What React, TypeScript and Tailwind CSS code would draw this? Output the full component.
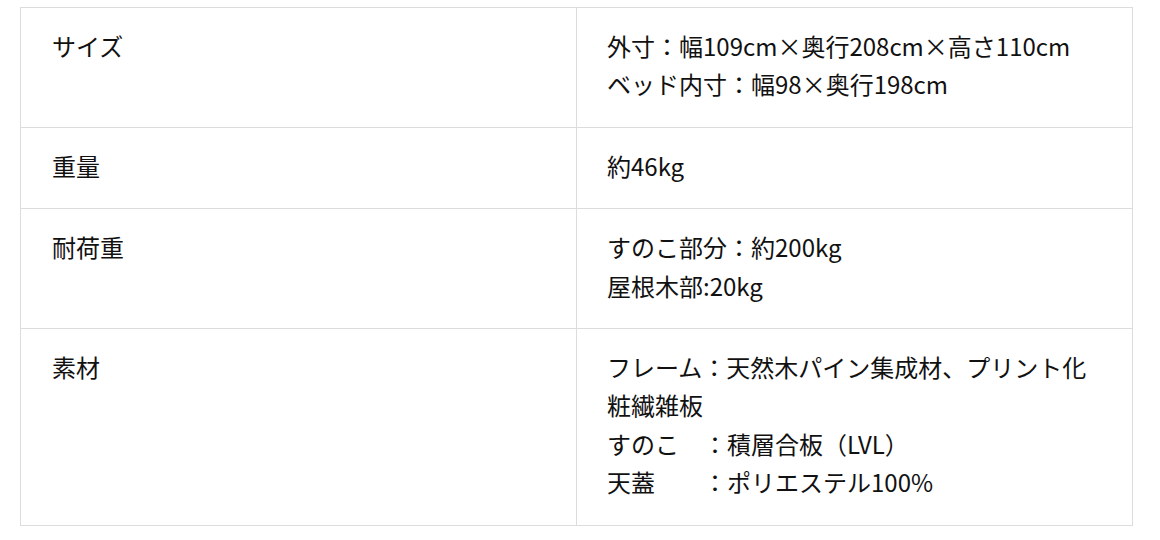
const rows: { label: string; lines: string[] }[] = [
  {
    label: "サイズ",
    lines: ["外寸：幅109cm×奥行208cm×高さ110cm", "ベッド内寸：幅98×奥行198cm"],
  },
  { label: "重量", lines: ["約46kg"] },
  { label: "耐荷重", lines: ["すのこ部分：約200kg", "屋根木部:20kg"] },
  {
    label: "素材",
    lines: [
      "フレーム：天然木パイン集成材、プリント化粧繊雑板",
      "すのこ　：積層合板（LVL）",
      "天蓋　　：ポリエステル100%",
    ],
  },
];

export default function App() {
  return (
    <div className="w-[1160px] h-[540px] bg-white pt-[7px] pl-[20px] font-['Noto_Sans_CJK_JP',sans-serif] text-[24px] leading-[1.6] text-[#111]">
      <table className="w-[1113px] border-collapse table-fixed">
        <tbody>
          {rows.map((r) => (
            <tr key={r.label}>
              <th className="w-1/2 border border-[#dcdcdc] px-[31px] pt-[19px] pb-[23px] text-left align-top font-normal">
                {r.label}
              </th>
              <td className="w-1/2 border border-[#dcdcdc] px-[30px] pt-[19px] pb-[23px] align-top">
                {r.lines.map((l) => (
                  <div key={l}>{l}</div>
                ))}
              </td>
            </tr>
          ))}
        </tbody>
      </table>
    </div>
  );
}
